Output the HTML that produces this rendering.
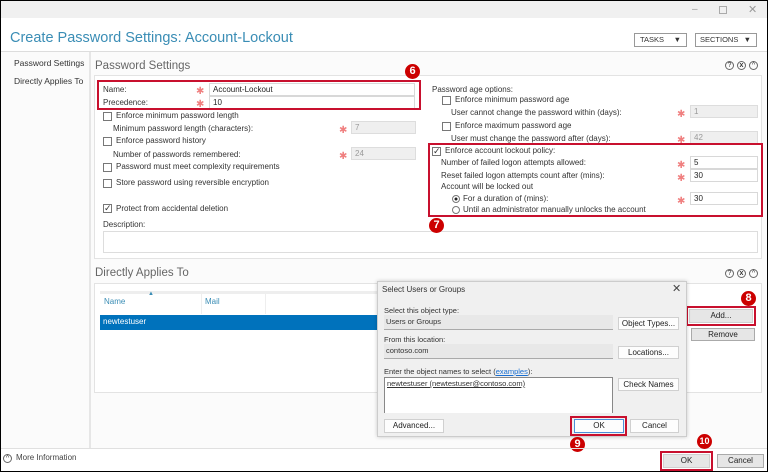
<!DOCTYPE html>
<html><head><meta charset="utf-8"><style>
*{box-sizing:border-box;margin:0;padding:0}
body{width:768px;height:472px;position:relative;overflow:hidden;background:#fff;font-family:"Liberation Sans",sans-serif;font-size:8px;color:#333}
.a{position:absolute;white-space:nowrap}
.f{position:absolute;background:#fff;border:1px solid #d8d8d8;height:13px;padding-left:3px;line-height:11px;font-size:8px;color:#222}
.fd{background:#efefef;color:#999;border-color:#ddd}
.cb{position:absolute;width:9px;height:9px;border:1px solid #777;background:#fff}
.st{position:absolute;color:#f08080;font-size:10px;line-height:10px;margin-top:3px}
.red{position:absolute;border:2px solid #c8102e}
.bad{position:absolute;width:15px;height:15px;border-radius:50%;background:#c00;color:#fff;font-weight:bold;font-size:11px;text-align:center;line-height:15px}
.btn{position:absolute;background:#fdfdfd;border:1px solid #d0d0d0;text-align:center;font-size:8px;color:#222}
.ic{position:absolute;width:9px;height:9px;border:1px solid #666;border-radius:50%;font-size:7px;line-height:7px;text-align:center;color:#333}
</style></head><body>
<div class="a" style="left:0;top:0;width:768px;height:472px;border:1px solid #000;z-index:9;pointer-events:none"></div>
<div class="a" style="left:0;top:0;width:768px;height:18px;background:#f0f0f0"></div>
<div class="a" style="left:692px;top:4px;color:#999;font-size:10px">–</div>
<div class="a" style="left:719px;top:6px;width:8px;height:8px;border:1px solid #aaa"></div>
<div class="a" style="left:748px;top:3px;color:#999;font-size:11px">✕</div>
<div class="a" style="left:10px;top:30px;font-size:14.5px;color:#3a8db5">Create Password Settings: Account-Lockout</div>
<div class="a" style="left:634px;top:33px;width:53px;height:14px;border:1px solid #999;font-size:7.5px;line-height:12px;padding-left:5px">TASKS <span style="position:absolute;right:5px">▼</span></div>
<div class="a" style="left:695px;top:33px;width:62px;height:14px;border:1px solid #999;font-size:7.5px;line-height:12px;padding-left:4px">SECTIONS <span style="position:absolute;right:5px">▼</span></div>
<div class="a" style="left:0;top:51px;width:768px;height:1px;background:#ddd"></div>
<div class="a" style="left:0;top:52px;width:768px;height:396px;background:#fbfbfb"></div>
<div class="a" style="left:89px;top:52px;width:2px;height:396px;background:#e6e6e6"></div>
<div class="a" style="left:14px;top:58px;font-size:8.5px;color:#333">Password Settings</div>
<div class="a" style="left:14px;top:76px;font-size:8.5px;color:#333">Directly Applies To</div>

<div class="a" style="left:95px;top:60px;font-size:11.5px;color:#666">Password Settings</div>
<div class="ic" style="left:725px;top:61px">?</div><div class="ic" style="left:737px;top:61px;font-weight:bold">x</div><div class="ic" style="left:749px;top:61px">^</div>
<div class="a" style="left:94px;top:75px;width:668px;height:184px;background:#fff;border:1px solid #e3e3e3"></div>

<div class="a" style="left:103px;top:85px">Name:</div><div class="st" style="left:196px;top:84px">✱</div><div class="f" style="left:209px;top:83px;width:206px">Account-Lockout</div>
<div class="a" style="left:103px;top:98px">Precedence:</div><div class="st" style="left:196px;top:97px">✱</div><div class="f" style="left:209px;top:96px;width:206px">10</div>
<div class="red" style="left:97px;top:80px;width:324px;height:30px"></div>
<div class="bad" style="left:405px;top:64px">6</div>

<div class="cb" style="left:103px;top:112px"></div><div class="a" style="left:116px;top:111px">Enforce minimum password length</div>
<div class="a" style="left:113px;top:124px">Minimum password length (characters):</div><div class="st" style="left:339px;top:123px">✱</div><div class="f fd" style="left:351px;top:121px;width:65px">7</div>
<div class="cb" style="left:103px;top:137px"></div><div class="a" style="left:116px;top:136px">Enforce password history</div>
<div class="a" style="left:113px;top:150px">Number of passwords remembered:</div><div class="st" style="left:339px;top:149px">✱</div><div class="f fd" style="left:351px;top:147px;width:65px">24</div>
<div class="cb" style="left:103px;top:163px"></div><div class="a" style="left:116px;top:162px">Password must meet complexity requirements</div>
<div class="cb" style="left:103px;top:179px"></div><div class="a" style="left:116px;top:178px">Store password using reversible encryption</div>
<div class="cb" style="left:103px;top:204px;font-size:9px;line-height:7px;text-align:center">✓</div><div class="a" style="left:116px;top:204px">Protect from accidental deletion</div>
<div class="a" style="left:103px;top:220px">Description:</div>
<div class="a" style="left:103px;top:231px;width:655px;height:22px;border:1px solid #ddd;background:#fff"></div>

<div class="a" style="left:432px;top:85px">Password age options:</div>
<div class="cb" style="left:442px;top:96px"></div><div class="a" style="left:455px;top:95px">Enforce minimum password age</div>
<div class="a" style="left:451px;top:108px">User cannot change the password within (days):</div><div class="st" style="left:677px;top:107px">✱</div><div class="f fd" style="left:690px;top:105px;width:68px">1</div>
<div class="cb" style="left:442px;top:122px"></div><div class="a" style="left:455px;top:121px">Enforce maximum password age</div>
<div class="a" style="left:451px;top:134px">User must change the password after (days):</div><div class="st" style="left:677px;top:133px">✱</div><div class="f fd" style="left:690px;top:131px;width:68px">42</div>
<div class="cb" style="left:432px;top:147px;font-size:9px;line-height:7px;text-align:center">✓</div><div class="a" style="left:445px;top:146px">Enforce account lockout policy:</div>
<div class="a" style="left:441px;top:158px">Number of failed logon attempts allowed:</div><div class="st" style="left:677px;top:158px">✱</div><div class="f" style="left:690px;top:156px;width:68px">5</div>
<div class="a" style="left:441px;top:171px">Reset failed logon attempts count after (mins):</div><div class="st" style="left:677px;top:171px">✱</div><div class="f" style="left:690px;top:169px;width:68px">30</div>
<div class="a" style="left:441px;top:182px">Account will be locked out</div>
<div class="a" style="left:452px;top:195px;width:8px;height:8px;border:1px solid #777;border-radius:50%;background:radial-gradient(#222 30%,#fff 40%)"></div><div class="a" style="left:463px;top:194px">For a duration of (mins):</div><div class="st" style="left:677px;top:194px">✱</div><div class="f" style="left:690px;top:192px;width:68px">30</div>
<div class="a" style="left:452px;top:206px;width:8px;height:8px;border:1px solid #777;border-radius:50%"></div><div class="a" style="left:463px;top:205px">Until an administrator manually unlocks the account</div>
<div class="red" style="left:428px;top:143px;width:335px;height:74px"></div>
<div class="bad" style="left:429px;top:218px">7</div>

<div class="a" style="left:95px;top:267px;font-size:11.5px;color:#666">Directly Applies To</div>
<div class="ic" style="left:725px;top:269px">?</div><div class="ic" style="left:737px;top:269px;font-weight:bold">x</div><div class="ic" style="left:749px;top:269px">^</div>
<div class="a" style="left:94px;top:283px;width:668px;height:110px;background:#fff;border:1px solid #e3e3e3"></div>
<div class="a" style="left:100px;top:291px;width:290px;height:24px;border-top:3px solid #eee"></div>
<div class="a" style="left:104px;top:297px;color:#3a8db5">Name</div><div class="a" style="left:148px;top:291px;color:#3a8db5;font-size:6px">▲</div>
<div class="a" style="left:201px;top:294px;width:1px;height:20px;background:#eee"></div>
<div class="a" style="left:205px;top:297px;color:#3a8db5">Mail</div>
<div class="a" style="left:265px;top:294px;width:1px;height:20px;background:#eee"></div>
<div class="a" style="left:100px;top:315px;width:290px;height:15px;background:#0072bc;color:#fff;padding:2px 3px">newtestuser</div>
<div class="btn" style="left:689px;top:309px;width:64px;height:14px;background:#e6e6e6;line-height:12px">Add...</div>
<div class="red" style="left:686px;top:306px;width:70px;height:20px"></div>
<div class="bad" style="left:741px;top:291px">8</div>
<div class="btn" style="left:691px;top:328px;width:64px;height:13px;background:#e6e6e6;line-height:11px;border-color:#aaa">Remove</div>

<div class="a" style="left:377px;top:281px;width:310px;height:156px;background:#f0f0f0;border:1px solid #ccc;box-shadow:0 0 4px rgba(0,0,0,.2)"></div>
<div class="a" style="left:382px;top:285px;font-size:8px">Select Users or Groups</div>
<div class="a" style="left:672px;top:282px;font-size:11px;color:#444">✕</div>
<div class="a" style="left:384px;top:306px;font-size:7.5px">Select this object type:</div>
<div class="a" style="left:384px;top:315px;width:229px;height:15px;background:#e8e8e8;border-bottom:1px solid #aaa;padding:2px 2px;font-size:7.5px">Users or Groups</div>
<div class="btn" style="left:618px;top:317px;width:61px;height:13px;line-height:11px">Object Types...</div>
<div class="a" style="left:384px;top:335px;font-size:7.5px">From this location:</div>
<div class="a" style="left:384px;top:344px;width:229px;height:15px;background:#e8e8e8;border-bottom:1px solid #aaa;padding:2px 2px;font-size:7.5px">contoso.com</div>
<div class="btn" style="left:618px;top:346px;width:61px;height:13px;line-height:11px">Locations...</div>
<div class="a" style="left:384px;top:367px;font-size:7.5px">Enter the object names to select (<span style="color:#1a6fd1;text-decoration:underline">examples</span>):</div>
<div class="a" style="left:384px;top:377px;width:229px;height:36px;background:#fff;border:1px solid #888;border-bottom:none;padding:1px 2px;font-size:7.5px;text-decoration:underline">newtestuser (newtestuser@contoso.com)</div>
<div class="btn" style="left:618px;top:378px;width:61px;height:13px;line-height:11px">Check Names</div>
<div class="btn" style="left:384px;top:419px;width:60px;height:14px;line-height:12px">Advanced...</div>
<div class="btn" style="left:574px;top:419px;width:50px;height:14px;line-height:12px;border-color:#4a90d9">OK</div>
<div class="red" style="left:570px;top:416px;width:57px;height:20px"></div>
<div class="btn" style="left:630px;top:419px;width:49px;height:14px;line-height:12px">Cancel</div>
<div class="bad" style="left:570px;top:437px">9</div>

<div class="a" style="left:0;top:448px;width:768px;height:1px;background:#e0e0e0"></div>
<div class="ic" style="left:3px;top:454px">^</div>
<div class="a" style="left:16px;top:453px;font-size:8px;color:#444">More Information</div>
<div class="btn" style="left:663px;top:454px;width:47px;height:14px;background:#e6e6e6;line-height:12px">OK</div>
<div class="red" style="left:660px;top:451px;width:53px;height:20px"></div>
<div class="bad" style="left:697px;top:434px;font-size:9px">10</div>
<div class="btn" style="left:717px;top:454px;width:47px;height:14px;background:#e6e6e6;line-height:12px;border-color:#aaa">Cancel</div>
</body></html>
